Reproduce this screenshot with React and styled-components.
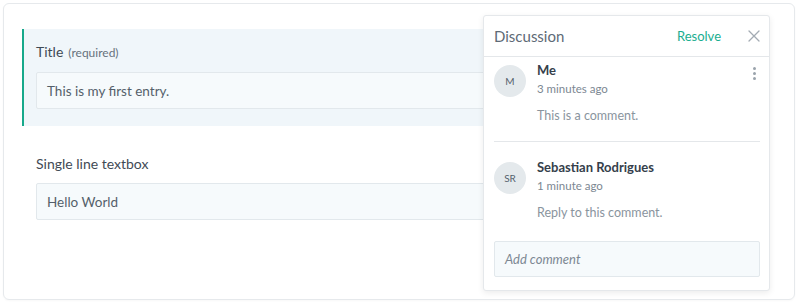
import React from 'react'
import styled, {createGlobalStyle} from 'styled-components'

const GlobalStyle = createGlobalStyle`
    * { box-sizing: border-box; }
    body {
        margin: 0;
        background: #ffffff;
        font-family: Lato, "Open Sans", sans-serif;
        color: #3d4852;
    }
`

const Page = styled.div`
    width: 800px;
    height: 306px;
    padding: 3px 5px 6px 3px;
`

const Card = styled.div`
    position: relative;
    height: 297px;
    border: 1px solid #e6e9ec;
    border-radius: 6px;
    padding: 25px 40px 0 18px;
    box-shadow: 0 1px 2px rgba(0, 0, 0, 0.03);
`

const Field = styled.div`
    border-left: 2px solid ${p => p.$active ? '#17a98b' : 'transparent'};
    background: ${p => p.$active ? '#f0f6fa' : 'transparent'};
    padding: 13px 14px 17px 12px;
    margin-bottom: ${p => p.$gap || 0}px;
`

const Label = styled.div`
    font-size: 14px;
    line-height: 20px;
    color: #3f4a55;
    margin-bottom: 9px;
`

const Hint = styled.span`
    font-size: 12px;
    color: #67727d;
    margin-left: 5px;
`

const Input = styled.div`
    height: 37px;
    border: 1px solid #e2e8ec;
    border-radius: 2px;
    background: #f6fafc;
    padding: 0 10px;
    display: flex;
    align-items: center;
    font-size: 13.5px;
    color: #545f6a;
`

const Popover = styled.div`
    position: absolute;
    left: 479px;
    top: 11px;
    width: 287px;
    height: 276px;
    background: #ffffff;
    border: 1px solid #e5e8eb;
    border-radius: 3px;
    box-shadow: 0 2px 6px rgba(0, 0, 0, 0.08);
    display: flex;
    flex-direction: column;
`

const Header = styled.div`
    height: 41px;
    border-bottom: 1px solid #e4e7ea;
    display: flex;
    align-items: center;
    padding: 0 9px 0 10px;
`

const Heading = styled.div`
    flex: 1;
    font-size: 15px;
    color: #5e6a76;
`

const Resolve = styled.div`
    font-size: 13px;
    color: #1aae90;
    margin-right: 27px;
`

const Body = styled.div`
    padding: 0 9px 0 10px;
    display: flex;
    flex-direction: column;
`

const Comment = styled.div`
    display: flex;
    gap: 11px;
    padding-top: ${p => p.$top}px;
    padding-bottom: 17px;
    border-bottom: ${p => p.$last ? 'none' : '1px solid #e4e7ea'};
    position: relative;
`

const Avatar = styled.div`
    width: 32px;
    height: 32px;
    border-radius: 50%;
    background: #e4e9ec;
    display: flex;
    align-items: center;
    justify-content: center;
    font-size: 10px;
    color: #56616c;
    flex-shrink: 0;
`

const Meta = styled.div`
    display: flex;
    flex-direction: column;
`

const Name = styled.div`
    font-size: 13px;
    font-weight: 700;
    color: #35404b;
    line-height: 16px;
    margin-top: -3px;
`

const Time = styled.div`
    font-size: 11.5px;
    color: #7c8792;
    line-height: 16px;
    margin-top: 3px;
`

const Text = styled.div`
    font-size: 12.5px;
    color: #8a949e;
    line-height: 16px;
    margin-top: 11px;
`

const Kebab = styled.div`
    position: absolute;
    right: 4px;
    top: 10px;
    display: flex;
    flex-direction: column;
    gap: 2px;
    & span {
        width: 3px;
        height: 3px;
        border-radius: 50%;
        background: #9aa3ac;
    }
`

const AddComment = styled.div`
    margin-top: 3px;
    height: 36px;
    border: 1px solid #e2e8ec;
    border-radius: 2px;
    background: #f6fafc;
    display: flex;
    align-items: center;
    padding: 0 10px;
    font-size: 13px;
    font-style: italic;
    color: #7d8893;
`

const Close = () => (
    <svg width="12" height="12" viewBox="0 0 12 12">
        <path d="M1 1 L11 11 M11 1 L1 11" stroke="#a3abb3" strokeWidth="1.3" strokeLinecap="round"/>
    </svg>
)

export default function App() {
    return <Page>
        <GlobalStyle/>
        <Card>
            <Field $active $gap={15}>
                <Label>Title<Hint>(required)</Hint></Label>
                <Input>This is my first entry.</Input>
            </Field>
            <Field>
                <Label>Single line textbox</Label>
                <Input>Hello World</Input>
            </Field>
            <Popover>
                <Header>
                    <Heading>Discussion</Heading>
                    <Resolve>Resolve</Resolve>
                    <Close/>
                </Header>
                <Body>
                    <Comment $top={8}>
                        <Avatar>M</Avatar>
                        <Meta>
                            <Name>Me</Name>
                            <Time>3 minutes ago</Time>
                            <Text>This is a comment.</Text>
                        </Meta>
                        <Kebab><span/><span/><span/></Kebab>
                    </Comment>
                    <Comment $top={20} $last>
                        <Avatar>SR</Avatar>
                        <Meta>
                            <Name>Sebastian Rodrigues</Name>
                            <Time>1 minute ago</Time>
                            <Text>Reply to this comment.</Text>
                        </Meta>
                    </Comment>
                    <AddComment>Add comment</AddComment>
                </Body>
            </Popover>
        </Card>
    </Page>
}
